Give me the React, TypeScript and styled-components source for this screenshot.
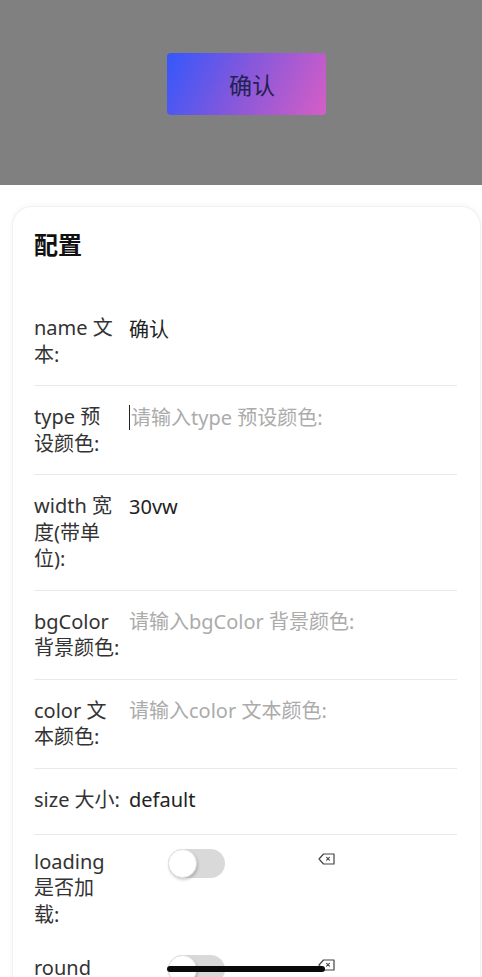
import React from 'react';
import styled, { createGlobalStyle } from 'styled-components';

const GlobalStyle = createGlobalStyle`
    html, body {
        margin: 0;
        padding: 0;
        background: #ffffff;
        overflow: hidden;
        font-family: 'Noto Sans', 'Noto Sans CJK SC', sans-serif;
    }
`;

const Page = styled.div`
    position: relative;
    width: 482px;
    height: 977px;
    overflow: hidden;
    background: #ffffff;
`;

const Preview = styled.div`
    height: 185px;
    box-sizing: border-box;
    padding-top: 53px;
    background: #808080;
    display: flex;
    justify-content: center;
`;

const GradientButton = styled.button`
    width: 159px;
    height: 62px;
    margin-left: 10px;
    padding: 0 0 0 12px;
    border: none;
    border-radius: 4px;
    background: linear-gradient(115deg, #3457fb 0%, #8a58da 50%, #d65ec5 100%);
    color: #23224d;
    font-family: 'Noto Sans CJK SC', sans-serif;
    font-size: 23px;
    cursor: pointer;
`;

const Card = styled.section`
    margin: 21px 1px 0 12px;
    padding: 19px 23px 0 21px;
    border: 1px solid #f1f1f1;
    border-bottom: none;
    border-radius: 20px 20px 0 0;
    box-shadow: 0 0 6px rgba(0, 0, 0, 0.05);
    background: #ffffff;
`;

const Title = styled.h2`
    margin: 0 0 35px;
    font-family: 'Noto Sans CJK SC', sans-serif;
    font-size: 24px;
    line-height: 36px;
    font-weight: 700;
    color: #111111;
`;

const Row = styled.div<{ $switch?: boolean }>`
    display: grid;
    grid-template-columns: 85px 1fr;
    column-gap: 10px;
    padding: ${(p) => (p.$switch ? '14px 0 13px' : '18px 0 17px')};
    border-bottom: ${(p) => (p.$switch ? 'none' : '1px solid #e9e9e9')};
    font-size: 20px;
    line-height: 26.5px;
`;

const Label = styled.div`
    color: #333333;
    white-space: nowrap;
`;

const Field = styled.div`
    display: flex;
    align-items: flex-start;
    min-height: 30px;
`;

const Caret = styled.span`
    width: 1px;
    height: 25px;
    margin: 1px 1px 0 0;
    background: #222222;
`;

const TextInput = styled.input`
    flex: 1;
    min-width: 0;
    height: 26.5px;
    padding: 0;
    border: none;
    outline: none;
    background: transparent;
    font-family: 'Noto Sans', 'Noto Sans CJK SC', sans-serif;
    font-size: 20px;
    color: #222222;

    &::placeholder {
        color: #ababab;
    }
`;

const SwitchField = styled.div`
    display: flex;
    align-items: flex-start;
    justify-content: space-between;
    width: 206px;
    padding-left: 39px;
    box-sizing: border-box;
`;

const Switch = styled.span<{ $on?: boolean }>`
    position: relative;
    display: block;
    width: 57px;
    height: 29px;
    border-radius: 15px;
    background: ${(p) => (p.$on ? '#3457fb' : '#d9d9d9')};

    &::after {
        content: '';
        position: absolute;
        left: 0;
        top: 0;
        width: 27px;
        height: 27px;
        border-radius: 50%;
        background: #ffffff;
        border: 1px solid #e2e2e2;
        box-shadow: 1px 2px 3px rgba(0, 0, 0, 0.18);
    }
`;

const ClearButton = styled.span`
    display: block;
    margin-top: 4px;
    line-height: 0;
`;

const HomeIndicator = styled.div`
    position: absolute;
    left: 167px;
    top: 966px;
    width: 158px;
    height: 6px;
    border-radius: 3px;
    background: #0a0a0a;
`;

const ClearIcon = () => (
    <svg width="17" height="12" viewBox="0 0 17 12" fill="none">
        <path d="M5.5 1H16V11H5.5L1 6Z" stroke="#444" strokeWidth="1.2" strokeLinejoin="round" />
        <path d="M8.6 4.3L11.4 7.1M11.4 4.3L8.6 7.1" stroke="#444" strokeWidth="1.1" strokeLinecap="round" />
    </svg>
);

type Item =
    | { kind: 'text'; label: string[]; value?: string; placeholder?: string; focused?: boolean }
    | { kind: 'switch'; label: string[] };

// label lines are split the way the narrow label column wraps them
const items: Item[] = [
    { kind: 'text', label: ['name 文', '本:'], value: '确认' },
    { kind: 'text', label: ['type 预', '设颜色:'], placeholder: '请输入type 预设颜色:', focused: true },
    { kind: 'text', label: ['width 宽', '度(带单', '位):'], value: '30vw' },
    { kind: 'text', label: ['bgColor', '背景颜色:'], placeholder: '请输入bgColor 背景颜色:' },
    { kind: 'text', label: ['color 文', '本颜色:'], placeholder: '请输入color 文本颜色:' },
    { kind: 'text', label: ['size 大小:'], value: 'default' },
    { kind: 'switch', label: ['loading', '是否加', '载:'] },
    { kind: 'switch', label: ['round', '是否圆', '角:'] },
];

export default function App() {
    return (
        <Page>
            <GlobalStyle />
            <Preview>
                <GradientButton>确认</GradientButton>
            </Preview>
            <Card>
                <Title>配置</Title>
                {items.map((item) => (
                    <Row key={item.label.join('')} $switch={item.kind === 'switch'}>
                        <Label>
                            {item.label.map((line, i) => (
                                <React.Fragment key={line}>
                                    {i > 0 && <br />}
                                    {line}
                                </React.Fragment>
                            ))}
                        </Label>
                        {item.kind === 'text' ? (
                            <Field>
                                {item.focused && <Caret />}
                                <TextInput
                                    readOnly
                                    value={item.value ?? ''}
                                    placeholder={item.placeholder ?? ''}
                                />
                            </Field>
                        ) : (
                            <SwitchField>
                                <Switch />
                                <ClearButton>
                                    <ClearIcon />
                                </ClearButton>
                            </SwitchField>
                        )}
                    </Row>
                ))}
            </Card>
            <HomeIndicator />
        </Page>
    );
}
